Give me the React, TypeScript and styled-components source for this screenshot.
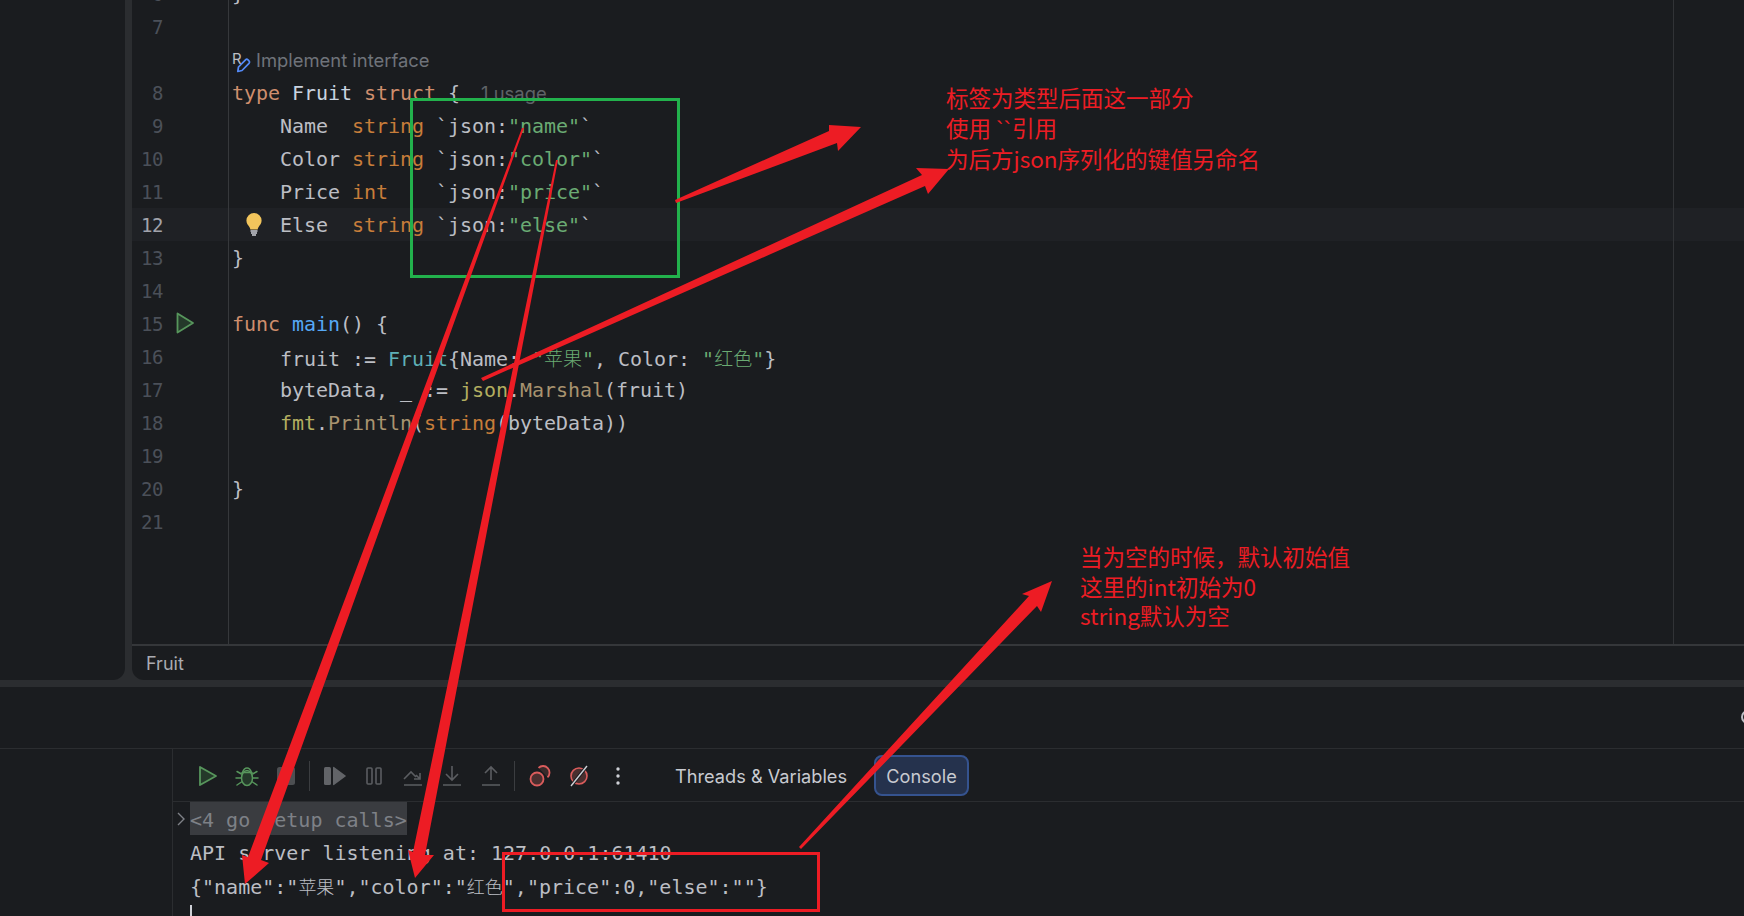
import React from 'react'
import styled, { createGlobalStyle } from 'styled-components'

const GlobalStyle = createGlobalStyle`
  html, body {
    margin: 0;
    padding: 0;
    background: #2b2d30;
    overflow: hidden;
  }
`

const colors: Record<string, string> = {
  text: '#bcbec4',
  key: '#cf8e6d',
  prim: '#c77d3a',
  str: '#6aab73',
  tag: '#bcbec4',
  func: '#56a8f5',
  type: '#c9d3e0',
  struct: '#5fb0b7',
  pkg: '#b3ae60',
  call: '#a8936f'
}

const Page = styled.div`
  position: relative;
  width: 1744px;
  height: 916px;
  overflow: hidden;
  display: flex;
  flex-direction: column;
  gap: 7px;
  font-family: Inter, 'Noto Sans CJK SC', sans-serif;
`

const Top = styled.div`
  flex: none;
  height: 680px;
  display: flex;
  gap: 7px;
`

const Sidebar = styled.div`
  width: 125px;
  background: #1a1c1f;
  border-bottom-right-radius: 12px;
`

const Editor = styled.div`
  position: relative;
  flex: 1;
  display: flex;
  flex-direction: column;
  overflow: hidden;
  background: #1a1c1f;
  border-bottom-left-radius: 12px;
`

const Guide = styled.div`
  position: absolute;
  top: 0;
  left: 1541px;
  width: 1px;
  height: 644px;
  background: #313336;
`

const Lines = styled.div`
  flex: 1;
  min-height: 0;
  display: flex;
  flex-direction: column;
  overflow: hidden;
  font-family: 'DejaVu Sans Mono', 'Noto Sans CJK SC', monospace;
  font-size: 20px;
  white-space: pre;
`

const Row = styled.div<{ $active?: boolean; $fill?: boolean }>`
  display: grid;
  grid-template-columns: 97px 1fr;
  flex: ${p => (p.$fill ? '1' : '0 0 33px')};
  min-height: 0;
  line-height: 35px;
  background: ${p => (p.$active ? '#1f2125' : 'transparent')};
  &:first-child {
    margin-top: -23px;
  }
`

const Gutter = styled.div`
  position: relative;
  border-right: 1px solid #36383b;
`

const LineNo = styled.span<{ $active?: boolean }>`
  position: absolute;
  right: 65px;
  font-size: 19px;
  letter-spacing: -0.5px;
  color: ${p => (p.$active ? '#a1a3ab' : '#4b5059')};
`

const GutterIcon = styled.svg<{ $x: number }>`
  position: absolute;
  left: ${p => p.$x}px;
  top: 4px;
`

const Code = styled.div`
  padding-left: 3px;
  color: ${colors.text};
  letter-spacing: -0.04px;
`

const Tok = styled.span<{ $c: string }>`
  color: ${p => colors[p.$c]};
`

const Cjk = styled.span<{ $size: number; $c?: string }>`
  font-family: 'Noto Sans CJK SC', sans-serif;
  font-size: ${p => p.$size}px;
  font-weight: 300;
  letter-spacing: 0;
  color: ${p => (p.$c ? colors[p.$c] : 'inherit')};
`

const Hint = styled.span`
  font-family: Inter, sans-serif;
  font-size: 18.4px;
  letter-spacing: 0;
  color: #6f737a;
`

const Usage = styled(Hint)`
  margin-left: 21px;
  color: #5f6368;
`

const InlayRow = styled.div`
  display: flex;
  align-items: center;
  height: 33px;
  margin: 1px 0 0 -1px;
`

const Breadcrumb = styled.div`
  flex: none;
  height: 34px;
  border-top: 2px solid #35373a;
  padding-left: 14px;
  font-size: 18px;
  line-height: 35px;
  color: #a9abb1;
`

const Bottom = styled.div`
  flex: 1;
  min-height: 0;
  overflow: hidden;
  display: flex;
  flex-direction: column;
  background: #1a1c1f;
`

const PanelHeader = styled.div`
  height: 61px;
  flex: none;
  border-bottom: 1px solid #2b2d30;
  display: flex;
  justify-content: flex-end;
  align-items: center;
`

const ClippedIcon = styled.div`
  width: 14px;
  height: 14px;
  margin-right: -11px;
  margin-bottom: 2px;
  box-sizing: border-box;
  border: 2px solid #bcbec4;
  border-radius: 50%;
`

const PanelBody = styled.div`
  flex: 1;
  min-height: 0;
  display: flex;
`

const RunList = styled.div`
  width: 172px;
  flex: none;
  border-right: 1px solid #2b2d30;
`

const Debugger = styled.div`
  flex: 1;
  display: flex;
  flex-direction: column;
`

const Toolbar = styled.div`
  height: 52px;
  flex: none;
  padding: 1px 0 0 15px;
  box-sizing: border-box;
  height: 53px;
  border-bottom: 1px solid #2b2d30;
  display: flex;
  align-items: center;
`

const Slot = styled.div`
  width: 39px;
  display: flex;
  justify-content: center;
  align-items: center;
`

const ToolDivider = styled.div`
  width: 1px;
  height: 30px;
  margin: 0 5px 0 4px;
  background: #3b3d40;
`

const Tabs = styled.div`
  display: flex;
  align-items: center;
  margin-left: 38px;
  color: #c8cad0;
  font-size: 18.2px;
`

const Tab = styled.div<{ $selected?: boolean }>`
  height: 41px;
  box-sizing: border-box;
  display: flex;
  align-items: center;
  border-radius: 8px;
  ${p =>
    p.$selected
      ? `
    width: 95px;
    margin-left: 27px;
    justify-content: center;
    background: #25324d;
    border: 2px solid #35538f;
  `
      : ''}
`

const Console = styled.div`
  flex: 1;
  font-family: 'DejaVu Sans Mono', 'Noto Sans CJK SC', monospace;
  font-size: 20px;
  white-space: pre;
  color: ${colors.text};
  padding-left: 17px;
`

const ConsoleLine = styled.div`
  height: 33px;
  line-height: 36px;
`

const Fold = styled(ConsoleLine)`
  position: relative;
  width: fit-content;
  background: #3a3c40;
  color: #7e8187;
`

const FoldChevron = styled.svg`
  position: absolute;
  left: -13px;
  top: 10px;
`

const Caret = styled.div`
  width: 2px;
  height: 20px;
  margin-top: 4px;
  background: #ced0d6;
`

const Overlay = styled.svg`
  position: absolute;
  left: 0;
  top: 0;
  pointer-events: none;
`

const Note = styled.div<{ $x: number; $y: number }>`
  position: absolute;
  left: ${p => p.$x}px;
  top: ${p => p.$y}px;
  font-family: 'Noto Sans CJK SC', sans-serif;
  font-size: 22.5px;
  line-height: 29.5px;
  white-space: pre;
  color: #ed1c24;
`

const Ticks = styled.span`
  font-family: 'Liberation Sans', sans-serif;
  margin-right: 1px;
`

const Frame = styled.div<{ $x: number; $y: number; $w: number; $h: number; $color: string }>`
  position: absolute;
  left: ${p => p.$x}px;
  top: ${p => p.$y}px;
  width: ${p => p.$w}px;
  height: ${p => p.$h}px;
  box-sizing: border-box;
  border: 3px solid ${p => p.$color};
`

type Part = [string, string]

const T = ({ parts }: { parts: Part[] }) => (
  <>
    {parts.map(([c, s], i) =>
      s === 'cjk' ? (
        <Cjk key={i} $size={19} $c="str">
          {c}
        </Cjk>
      ) : (
        <Tok key={i} $c={c}>
          {s}
        </Tok>
      )
    )}
  </>
)

const field = (name: string, type: string, tag: string) => (
  <T
    parts={[
      ['text', `    ${name}`],
      ['prim', type],
      ['tag', ' `json:'],
      ['str', `"${tag}"`],
      ['tag', '`']
    ]}
  />
)

const Bulb = () => (
  <GutterIcon $x={113} width="18" height="24" viewBox="0 0 18 24">
    <path d="M9 1a7.6 7.6 0 0 0-7.6 7.6c0 3 1.7 4.6 3 6.4.6.9.8 1.500.9 2.400h7.400c.1-.9.3-1.500.9-2.400 1.300-1.800 3-3.400 3-6.400A7.600 7.600 0 0 0 9 1z" fill="#f2c55c" />
    <path d="M5.500 19h7M6 21h6M7 23h4" stroke="#ced0d6" strokeWidth="1.300" />
  </GutterIcon>
)

const RunMark = () => (
  <GutterIcon $x={43} width="20" height="24" viewBox="0 0 20 24">
    <path d="M2.500 2.500 18 12 2.500 21.500z" fill="#24392a" stroke="#57965c" strokeWidth="1.800" strokeLinejoin="round" />
  </GutterIcon>
)

const Implement = () => (
  <svg width="25" height="28" viewBox="0 0 25 28">
    <text x="1" y="17" fontFamily="Inter, sans-serif" fontSize="15" fill="#bcbec4">
      R
    </text>
    <path d="M6.800 24.500 7.500 20 14.500 12.800a1.800 1.800 0 0 1 2.500 0l1 1a1.800 1.800 0 0 1 0 2.500L11 23.500z" fill="none" stroke="#548af7" strokeWidth="1.700" strokeLinejoin="round" />
  </svg>
)

const Play = () => (
  <svg width="20" height="22" viewBox="0 0 20 22">
    <path d="M2 2 18 11 2 20z" fill="#24392a" stroke="#57965c" strokeWidth="1.800" strokeLinejoin="round" />
  </svg>
)

const Bug = () => (
  <svg width="24" height="22" viewBox="0 0 24 22" fill="none" stroke="#57965c" strokeWidth="1.500" strokeLinecap="round">
    <ellipse cx="12" cy="13" rx="5.500" ry="7.500" fill="#24392a" />
    <path d="M7.500 7.500c1-3 2.500-4.500 4.500-4.500s3.500 1.500 4.500 4.500M7 7.500h10" />
    <path d="M6.500 9 2 6.500M17.500 9 22 6.500M6 13H1M18 13h5M6.500 17 2 20M17.500 17 22 20" />
  </svg>
)

const Stop = () => (
  <svg width="18" height="18" viewBox="0 0 18 18">
    <rect width="18" height="18" rx="2.500" fill="#4d4f52" />
  </svg>
)

const Resume = () => (
  <svg width="22" height="20" viewBox="0 0 22 20">
    <rect x="0" y="1" width="7" height="18" rx="1.500" fill="#626468" />
    <path d="M9 1.500v17a.7.7 0 0 0 1 .6L21.500 10.500a.6.6 0 0 0 0-1L10 .9a.7.7 0 0 0-1 .6z" fill="#626468" />
  </svg>
)

const Pause = () => (
  <svg width="16" height="20" viewBox="0 0 16 20" fill="none" stroke="#5b5d61" strokeWidth="1.600">
    <rect x="1" y="2" width="5" height="16" rx="1" />
    <rect x="10" y="2" width="5" height="16" rx="1" />
  </svg>
)

const StepIcon = ({ d }: { d: string }) => (
  <svg width="20" height="22" viewBox="0 0 20 22" fill="none" stroke="#5b5d61" strokeWidth="1.600">
    <path d={d} />
  </svg>
)

const Breakpoints = () => (
  <svg width="22" height="24" viewBox="0 0 22 24" fill="none">
    <path d="M9.500 3.800a6.500 6.500 0 1 1 9 9.500" fill="#3a2a2a" stroke="#db5c5c" strokeWidth="1.800" />
    <circle cx="8" cy="15" r="6.500" fill="#4a2f2f" stroke="#db5c5c" strokeWidth="1.800" />
  </svg>
)

const Mute = () => (
  <svg width="20" height="24" viewBox="0 0 20 24" fill="none">
    <circle cx="10" cy="12" r="8" fill="#4a2f2f" stroke="#db5c5c" strokeWidth="1.600" />
    <path d="M18 2 2 22" stroke="#1a1c1f" strokeWidth="3.500" />
    <path d="M18 2 2 22" stroke="#ced0d6" strokeWidth="1.400" />
  </svg>
)

const Dots = () => (
  <svg width="4" height="18" viewBox="0 0 4 18" fill="#ced0d6">
    <circle cx="2" cy="2" r="1.700" />
    <circle cx="2" cy="9" r="1.700" />
    <circle cx="2" cy="16" r="1.700" />
  </svg>
)

const arrows = [
  '675,200 829,131 829,125 861,127 838,151 837,143 676,203',
  '481,378 922,175 916,168 949,169 928,194 925,186 483,381',
  '524,128 261,860 269,863 245,884 242,855 248,857 522,128',
  '558,160 425,855 434,855 415,878 408,850 413,852 556,160',
  '799,847 1029,596 1022,594 1052,581 1041,612 1037,606 801,849'
]

const App = () => {
  const rows: { no?: number; active?: boolean; icon?: React.ReactNode; code?: React.ReactNode }[] = [
    { no: 6, code: <Tok $c="text">{'}'}</Tok> },
    { no: 7 },
    {
      code: (
        <InlayRow>
          <Implement />
          <Hint>Implement interface</Hint>
        </InlayRow>
      )
    },
    {
      no: 8,
      code: (
        <>
          <T
            parts={[
              ['key', 'type'],
              ['text', ' '],
              ['type', 'Fruit'],
              ['text', ' '],
              ['key', 'struct'],
              ['text', ' {']
            ]}
          />
          <Usage>1 usage</Usage>
        </>
      )
    },
    { no: 9, code: field('Name  ', 'string', 'name') },
    { no: 10, code: field('Color ', 'string', 'color') },
    { no: 11, code: field('Price ', 'int   ', 'price') },
    { no: 12, active: true, icon: <Bulb />, code: field('Else  ', 'string', 'else') },
    { no: 13, code: '}' },
    { no: 14 },
    {
      no: 15,
      icon: <RunMark />,
      code: (
        <T
          parts={[
            ['key', 'func'],
            ['text', ' '],
            ['func', 'main'],
            ['text', '() {']
          ]}
        />
      )
    },
    {
      no: 16,
      code: (
        <T
          parts={[
            ['text', '    fruit := '],
            ['struct', 'Fruit'],
            ['text', '{Name: '],
            ['str', '"'],
            ['苹果', 'cjk'],
            ['str', '"'],
            ['text', ', Color: '],
            ['str', '"'],
            ['红色', 'cjk'],
            ['str', '"'],
            ['text', '}']
          ]}
        />
      )
    },
    {
      no: 17,
      code: (
        <T
          parts={[
            ['text', '    byteData, _ := '],
            ['pkg', 'json'],
            ['text', '.'],
            ['call', 'Marshal'],
            ['text', '(fruit)']
          ]}
        />
      )
    },
    {
      no: 18,
      code: (
        <T
          parts={[
            ['text', '    '],
            ['pkg', 'fmt'],
            ['text', '.'],
            ['call', 'Println'],
            ['text', '('],
            ['prim', 'string'],
            ['text', '(byteData))']
          ]}
        />
      )
    },
    { no: 19 },
    { no: 20, code: '}' },
    { no: 21 }
  ]

  return (
    <>
      <GlobalStyle />
      <Page>
        <Top>
          <Sidebar />
          <Editor>
            <Lines>
              {rows.map((r, i) => (
                <Row key={i} $active={r.active}>
                  <Gutter>
                    {r.no !== undefined && <LineNo $active={r.active}>{r.no}</LineNo>}
                    {r.icon}
                  </Gutter>
                  <Code>{r.code}</Code>
                </Row>
              ))}
              <Row $fill>
                <Gutter />
                <Code />
              </Row>
            </Lines>
            <Guide />
            <Breadcrumb>Fruit</Breadcrumb>
          </Editor>
        </Top>
        <Bottom>
          <PanelHeader>
            <ClippedIcon />
          </PanelHeader>
          <PanelBody>
            <RunList />
            <Debugger>
              <Toolbar>
                <Slot>
                  <Play />
                </Slot>
                <Slot>
                  <Bug />
                </Slot>
                <Slot>
                  <Stop />
                </Slot>
                <ToolDivider />
                <Slot>
                  <Resume />
                </Slot>
                <Slot>
                  <Pause />
                </Slot>
                <Slot>
                  <StepIcon d="M1 14 8 7l5 5M11 14h6V8M17 14 13 10M1 20h18" />
                </Slot>
                <Slot>
                  <StepIcon d="M10 1v14M4 9l6 6 6-6M1 20h18" />
                </Slot>
                <Slot>
                  <StepIcon d="M10 15V2M4 8l6-6 6 6M1 20h18" />
                </Slot>
                <ToolDivider />
                <Slot>
                  <Breakpoints />
                </Slot>
                <Slot>
                  <Mute />
                </Slot>
                <Slot>
                  <Dots />
                </Slot>
                <Tabs>
                  <Tab>Threads &amp; Variables</Tab>
                  <Tab $selected>Console</Tab>
                </Tabs>
              </Toolbar>
              <Console>
                <Fold>
                  <FoldChevron width="8" height="14" viewBox="0 0 8 14" fill="none" stroke="#7e8187" strokeWidth="1.400">
                    <path d="M1 1l6 6-6 6" />
                  </FoldChevron>
                  {'<4 go setup calls>'}
                </Fold>
                <ConsoleLine>API server listening at: 127.0.0.1:61410</ConsoleLine>
                <ConsoleLine>
                  {'{"name":"'}
                  <Cjk $size={18}>苹果</Cjk>
                  {'","color":"'}
                  <Cjk $size={18}>红色</Cjk>
                  {'","price":0,"else":""}'}
                </ConsoleLine>
                <Caret />
              </Console>
            </Debugger>
          </PanelBody>
        </Bottom>

        <Frame $x={410} $y={98} $w={270} $h={180} $color="#22b14c" />
        <Frame $x={502} $y={852} $w={318} $h={60} $color="#ed1c24" />
        <Overlay width="1744" height="916" viewBox="0 0 1744 916">
          {arrows.map(points => (
            <polygon key={points} points={points} fill="#ed1c24" />
          ))}
        </Overlay>
        <Note $x={946} $y={83}>
          <div>标签为类型后面这一部分</div>
          <div>
            使用 <Ticks>``</Ticks>引用
          </div>
          <div>为后方json序列化的键值另命名</div>
        </Note>
        <Note $x={1080} $y={542}>
          <div>当为空的时候，默认初始值</div>
          <div>这里的int初始为0</div>
          <div>string默认为空</div>
        </Note>
      </Page>
    </>
  )
}

export default App
